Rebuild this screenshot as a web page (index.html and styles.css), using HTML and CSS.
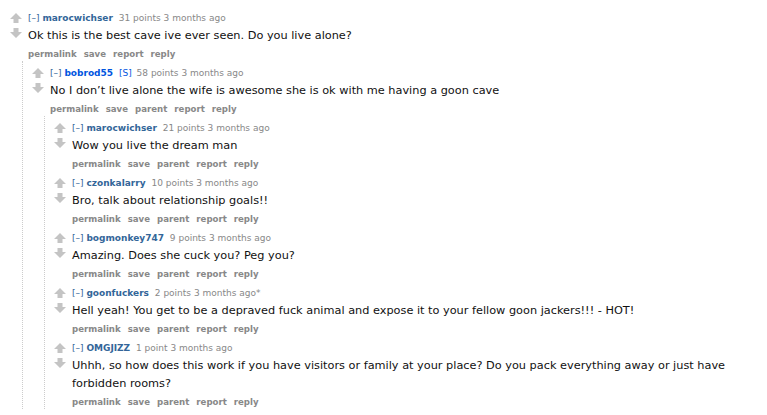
FILE: index.html
```html
<!DOCTYPE html>
<html lang="en">
  <head>
    <meta charset="UTF-8" />
    <meta name="viewport" content="width=device-width, initial-scale=1.0" />
    <title>Comments</title>
    <link rel="stylesheet" href="styles.css">
  </head>
  <body>
    <div class="thread">
      <div class="comment">
        <div class="comment-main">
          <div class="midcol">
            <svg class="arrow" viewBox="0 0 12 10"><path d="M6 0 L12 6 L8.5 6 L8.5 10 L3.5 10 L3.5 6 L0 6 Z" /></svg>
            <svg class="arrow down" viewBox="0 0 12 10"><path d="M6 10 L12 4 L8.5 4 L8.5 0 L3.5 0 L3.5 4 L0 4 Z" /></svg>
          </div>
          <div class="entry">
            <p class="tagline"><span class="expand">[&ndash;]</span> <span class="author">marocwichser</span> <span class="score">31 points</span> 3 months ago</p>
            <div class="md">Ok this is the best cave ive ever seen. Do you live alone?</div>
            <ul class="buttons">
              <li>permalink</li>
              <li>save</li>
              <li>report</li>
              <li>reply</li>
            </ul>
          </div>
        </div>

        <div class="child">
          <div class="comment">
            <div class="comment-main">
              <div class="midcol">
                <svg class="arrow" viewBox="0 0 12 10"><path d="M6 0 L12 6 L8.5 6 L8.5 10 L3.5 10 L3.5 6 L0 6 Z" /></svg>
                <svg class="arrow down" viewBox="0 0 12 10"><path d="M6 10 L12 4 L8.5 4 L8.5 0 L3.5 0 L3.5 4 L0 4 Z" /></svg>
              </div>
              <div class="entry">
                <p class="tagline"><span class="expand">[&ndash;]</span> <span class="author submitter">bobrod55</span> <span class="flag">[S]</span> <span class="score">58 points</span> 3 months ago</p>
                <div class="md">No I don&rsquo;t live alone the wife is awesome she is ok with me having a goon cave</div>
                <ul class="buttons">
                  <li>permalink</li>
                  <li>save</li>
                  <li>parent</li>
                  <li>report</li>
                  <li>reply</li>
                </ul>
              </div>
            </div>

            <div class="child">
              <div class="comment">
                <div class="comment-main">
                  <div class="midcol">
                    <svg class="arrow" viewBox="0 0 12 10"><path d="M6 0 L12 6 L8.5 6 L8.5 10 L3.5 10 L3.5 6 L0 6 Z" /></svg>
                    <svg class="arrow down" viewBox="0 0 12 10"><path d="M6 10 L12 4 L8.5 4 L8.5 0 L3.5 0 L3.5 4 L0 4 Z" /></svg>
                  </div>
                  <div class="entry">
                    <p class="tagline"><span class="expand">[&ndash;]</span> <span class="author">marocwichser</span> <span class="score">21 points</span> 3 months ago</p>
                    <div class="md">Wow you live the dream man</div>
                    <ul class="buttons">
                      <li>permalink</li>
                      <li>save</li>
                      <li>parent</li>
                      <li>report</li>
                      <li>reply</li>
                    </ul>
                  </div>
                </div>
              </div>

              <div class="comment">
                <div class="comment-main">
                  <div class="midcol">
                    <svg class="arrow" viewBox="0 0 12 10"><path d="M6 0 L12 6 L8.5 6 L8.5 10 L3.5 10 L3.5 6 L0 6 Z" /></svg>
                    <svg class="arrow down" viewBox="0 0 12 10"><path d="M6 10 L12 4 L8.5 4 L8.5 0 L3.5 0 L3.5 4 L0 4 Z" /></svg>
                  </div>
                  <div class="entry">
                    <p class="tagline"><span class="expand">[&ndash;]</span> <span class="author">czonkalarry</span> <span class="score">10 points</span> 3 months ago</p>
                    <div class="md">Bro, talk about relationship goals!!</div>
                    <ul class="buttons">
                      <li>permalink</li>
                      <li>save</li>
                      <li>parent</li>
                      <li>report</li>
                      <li>reply</li>
                    </ul>
                  </div>
                </div>
              </div>

              <div class="comment">
                <div class="comment-main">
                  <div class="midcol">
                    <svg class="arrow" viewBox="0 0 12 10"><path d="M6 0 L12 6 L8.5 6 L8.5 10 L3.5 10 L3.5 6 L0 6 Z" /></svg>
                    <svg class="arrow down" viewBox="0 0 12 10"><path d="M6 10 L12 4 L8.5 4 L8.5 0 L3.5 0 L3.5 4 L0 4 Z" /></svg>
                  </div>
                  <div class="entry">
                    <p class="tagline"><span class="expand">[&ndash;]</span> <span class="author">bogmonkey747</span> <span class="score">9 points</span> 3 months ago</p>
                    <div class="md">Amazing. Does she cuck you? Peg you?</div>
                    <ul class="buttons">
                      <li>permalink</li>
                      <li>save</li>
                      <li>parent</li>
                      <li>report</li>
                      <li>reply</li>
                    </ul>
                  </div>
                </div>
              </div>

              <div class="comment">
                <div class="comment-main">
                  <div class="midcol">
                    <svg class="arrow" viewBox="0 0 12 10"><path d="M6 0 L12 6 L8.5 6 L8.5 10 L3.5 10 L3.5 6 L0 6 Z" /></svg>
                    <svg class="arrow down" viewBox="0 0 12 10"><path d="M6 10 L12 4 L8.5 4 L8.5 0 L3.5 0 L3.5 4 L0 4 Z" /></svg>
                  </div>
                  <div class="entry">
                    <p class="tagline"><span class="expand">[&ndash;]</span> <span class="author">goonfuckers</span> <span class="score">2 points</span> 3 months ago*</p>
                    <div class="md">Hell yeah! You get to be a depraved fuck animal and expose it to your fellow goon jackers!!! - HOT!</div>
                    <ul class="buttons">
                      <li>permalink</li>
                      <li>save</li>
                      <li>parent</li>
                      <li>report</li>
                      <li>reply</li>
                    </ul>
                  </div>
                </div>
              </div>

              <div class="comment">
                <div class="comment-main">
                  <div class="midcol">
                    <svg class="arrow" viewBox="0 0 12 10"><path d="M6 0 L12 6 L8.5 6 L8.5 10 L3.5 10 L3.5 6 L0 6 Z" /></svg>
                    <svg class="arrow down" viewBox="0 0 12 10"><path d="M6 10 L12 4 L8.5 4 L8.5 0 L3.5 0 L3.5 4 L0 4 Z" /></svg>
                  </div>
                  <div class="entry">
                    <p class="tagline"><span class="expand">[&ndash;]</span> <span class="author">OMGJIZZ</span> <span class="score">1 point</span> 3 months ago</p>
                    <div class="md">Uhhh, so how does this work if you have visitors or family at your place? Do you pack everything away or just have forbidden rooms?</div>
                    <ul class="buttons">
                      <li>permalink</li>
                      <li>save</li>
                      <li>parent</li>
                      <li>report</li>
                      <li>reply</li>
                    </ul>
                  </div>
                </div>
              </div>
            </div>
          </div>
        </div>
      </div>
    </div>
  </body>
</html>
```

FILE: styles.css
```css
body {
  margin: 0;
  background: #fff;
  font-family: "DejaVu Sans", Verdana, sans-serif;
  color: #111;
  overflow: hidden;
}

.thread {
  padding: 6px 0 0 6px;
}

.comment {
  padding-top: 5px;
}

.comment-main {
  display: flex;
}

.midcol {
  width: 22px;
  flex-shrink: 0;
  display: flex;
  flex-direction: column;
  padding-top: 2px;
}

.arrow {
  width: 12px;
  height: 10px;
  margin-left: 4px;
  fill: #c4c4c4;
}

.arrow.down {
  margin-top: 5px;
}

.entry {
  flex: 1;
}

.tagline {
  margin: 0 0 2px;
  font-size: 9px;
  line-height: 14px;
  color: #888;
}

.expand {
  color: #369;
}

.author {
  color: #369;
  font-weight: bold;
  margin-right: 3px;
}

.author.submitter,
.flag {
  color: #0055df;
}

.flag {
  margin-right: 2px;
}

.md {
  font-size: 11.3px;
  line-height: 18px;
  max-width: 665px;
}

.buttons {
  list-style: none;
  margin: 2px 0 0;
  padding: 0;
  display: flex;
  gap: 7px;
  font-size: 8.6px;
  line-height: 14px;
  font-weight: bold;
  color: #888;
}

.child {
  margin-left: 16px;
  padding-left: 5px;
  border-left: 1px dotted #ccc;
}
```
